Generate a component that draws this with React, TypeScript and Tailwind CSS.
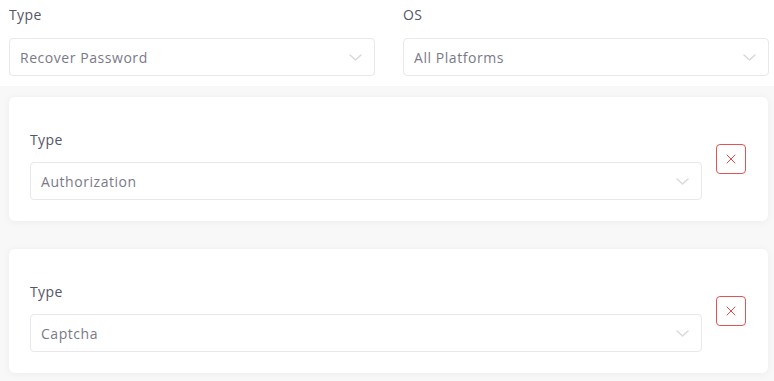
import { X } from "lucide-react";

type SelectProps = { value: string };

function Chevron() {
  return (
    <svg width="13" height="7" viewBox="0 0 13 7" fill="none" className="text-[#d9d9db]">
      <polyline points="1,1 6.5,6 12,1" stroke="currentColor" strokeWidth="1.5" strokeLinecap="round" strokeLinejoin="round" />
    </svg>
  );
}

function FakeSelect({ value }: SelectProps) {
  return (
    <div className="flex h-[38px] items-center justify-between rounded-[4px] border border-[#e8e8ea] bg-white pl-[10px] pr-[12px]">
      <span className="text-[14px] tracking-[0.55px] text-[#7a7a87]">{value}</span>
      <Chevron />
    </div>
  );
}

function Field({ label, value }: { label: string; value: string }) {
  return (
    <div>
      <div className="mb-[13px] text-[14px] leading-[20px] tracking-[0.4px] text-[#555565]">{label}</div>
      <FakeSelect value={value} />
    </div>
  );
}

function RuleCard({ value }: { value: string }) {
  return (
    <div className="mx-[9px] mr-[6px] rounded-[6px] bg-white p-[21px] pr-[22px] shadow-[0_1px_8px_rgba(0,0,0,0.05)]">
      <div className="flex items-center gap-[14px]">
        <div className="flex-1 pt-[12px]">
          <div className="mb-[12px] text-[14px] leading-[20px] tracking-[0.4px] text-[#555565]">Type</div>
          <FakeSelect value={value} />
        </div>
        <button className="flex h-[30px] w-[30px] items-center justify-center rounded-[4px] border border-[#e25555] bg-white">
          <X className="h-[16px] w-[16px] text-[#e04848]" strokeWidth={1.5} />
        </button>
      </div>
    </div>
  );
}

export default function App() {
  return (
    <div
      className="h-[381px] w-[774px] overflow-hidden bg-[#f8f8f9]"
      style={{ fontFamily: '"Open Sans", "Noto Sans", sans-serif' }}
    >
      <div className="grid grid-cols-2 gap-[28px] bg-white pb-[10px] pl-[9px] pr-[5px] pt-[5px]">
        <Field label="Type" value="Recover Password" />
        <Field label="OS" value="All Platforms" />
      </div>
      <div className="mt-[11px] flex flex-col gap-[28px]">
        <RuleCard value="Authorization" />
        <RuleCard value="Captcha" />
      </div>
    </div>
  );
}
